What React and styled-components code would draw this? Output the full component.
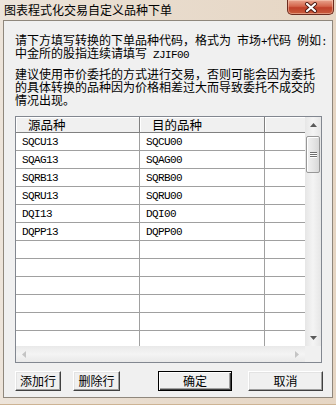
import React from "react"
import styled, { createGlobalStyle, css } from "styled-components"

const GlobalStyle = createGlobalStyle`
  html, body {
    margin: 0;
    padding: 0;
  }
  body {
    width: 336px;
    height: 405px;
    overflow: hidden;
    font-family: "Noto Sans CJK SC", sans-serif;
  }
`

const Window = styled.div`
  width: 336px;
  height: 405px;
  box-sizing: border-box;
  display: flex;
  flex-direction: column;
  background: linear-gradient(90deg, #ede4da 0%, #e8dbcc 50%, #e6d6c4 100%);
  border-bottom: 1px solid #cdb393;
`

const TitleBar = styled.div`
  height: 20px;
  display: flex;
  align-items: flex-start;
  padding-left: 4px;
`

const Title = styled.div`
  font-size: 12px;
  line-height: 20px;
  color: #000;
  white-space: nowrap;
`

const CloseButton = styled.div`
  margin-left: auto;
  margin-right: 2px;
  width: 47px;
  height: 15px;
  box-sizing: border-box;
  display: flex;
  align-items: center;
  justify-content: center;
  border: 1px solid #6b2b1f;
  border-top: none;
  border-radius: 0 0 5px 5px;
  background: linear-gradient(#e9a48e 0%, #d4664c 45%, #c0412a 55%, #c85c3c 100%);
  box-shadow: inset 0 0 0 1px rgba(255, 220, 200, 0.45);
`

const Client = styled.div`
  flex: 1;
  margin: 0 3px 6px 3px;
  border: 1px solid #8f877c;
  background: #f0f0f0;
  padding: 12px 10px 0 11px;
  display: flex;
  flex-direction: column;
`

const Note = styled.p`
  margin: 0;
  font-size: 12px;
  line-height: 13px;
  color: #000;
  white-space: nowrap;
  & + & {
    margin-top: 8px;
  }
`

const Latin = styled.span`
  font-family: "Liberation Mono", monospace;
  font-size: 11px;
  line-height: 0;
  letter-spacing: -0.6px;
`

const GridBox = styled.div`
  margin-top: 10px;
  width: 307px;
  height: 247px;
  box-sizing: border-box;
  border: 1px solid #828790;
  display: grid;
  grid-template-columns: 1fr 16px;
  grid-template-rows: 1fr 16px;
  background: #fff;
`

const TableArea = styled.div`
  overflow: hidden;
`

const HeaderRow = styled.div`
  display: flex;
  height: 16px;
  box-sizing: border-box;
  border-bottom: 1px solid #808080;
  background: #f0f0f0;
`

const HeaderCell = styled.div`
  width: ${p => p.$w}px;
  flex: ${p => (p.$fill ? 1 : "none")};
  box-sizing: border-box;
  border-right: ${p => (p.$fill ? "none" : "1px solid #808080")};
  box-shadow: inset 1px 1px 0 #ffffff;
  padding-left: 12px;
  font-size: 12.5px;
  line-height: 15px;
  color: #000;
`

const Row = styled.div`
  display: flex;
  height: 18px;
  box-sizing: border-box;
  border-bottom: 1px solid #a0a0a0;
`

const Cell = styled.div`
  width: ${p => p.$w}px;
  flex: ${p => (p.$fill ? 1 : "none")};
  box-sizing: border-box;
  border-right: ${p => (p.$fill ? "none" : "1px solid #a0a0a0")};
  padding-left: 6px;
  padding-top: 1px;
  font-family: "Liberation Mono", monospace;
  font-size: 11px;
  letter-spacing: -0.6px;
  line-height: 16px;
  color: #000;
`

const VScroll = styled.div`
  display: flex;
  flex-direction: column;
  background: linear-gradient(90deg, #e6e6e6, #f4f4f4 50%, #e6e6e6);
`

const HScroll = styled.div`
  display: flex;
  align-items: center;
  justify-content: space-between;
  background: linear-gradient(#e9e9e9, #f4f4f4 50%, #e9e9e9);
  padding: 0 6px;
`

const Corner = styled.div`
  background: #f0f0f0;
`

const ArrowBox = styled.div`
  height: 16px;
  flex: none;
  display: flex;
  align-items: center;
  justify-content: center;
`

const Track = styled.div`
  flex: 1;
  padding: 3px 1px 0 1px;
`

const Thumb = styled.div`
  height: 37px;
  box-sizing: border-box;
  border: 1px solid #979797;
  border-radius: 2px;
  background: linear-gradient(90deg, #f1f1f1, #e6e6e6 50%, #d8d8d8);
  box-shadow: inset 1px 1px 0 #ffffff;
  display: flex;
  flex-direction: column;
  align-items: center;
  justify-content: center;
  gap: 1px;
`

const Grip = styled.div`
  width: 7px;
  height: 1px;
  background: #6f6f6f;
  box-shadow: 0 1px 0 #ffffff;
`

const ButtonRow = styled.div`
  margin-top: 8px;
  width: 308px;
  display: flex;
  justify-content: space-between;
`

const ButtonGroup = styled.div`
  display: flex;
  gap: ${p => p.$gap}px;
`

const Button = styled.button`
  width: ${p => p.$w}px;
  height: 20px;
  padding: 0;
  box-sizing: border-box;
  font-family: "Noto Sans CJK SC", sans-serif;
  font-size: 12px;
  line-height: 16px;
  color: #000;
  background: #f0f0f0;
  border: 1px solid;
  border-color: #ffffff #404040 #404040 #ffffff;
  box-shadow: inset -1px -1px 0 #a0a0a0, inset 1px 1px 0 #e3e3e3;
  ${p =>
    p.$default &&
    css`
      border-color: #000;
      box-shadow: inset 1px 1px 0 #ffffff, inset -1px -1px 0 #404040, inset -2px -2px 0 #a0a0a0;
    `}
`

const Triangle = ({ dir, color }) => {
  const pts = {
    up: "0,4 7,4 3.5,0",
    down: "0,0 7,0 3.5,4",
    left: "4,0 4,7 0,3.5",
    right: "0,0 0,7 4,3.5",
  }[dir]
  const vertical = dir === "up" || dir === "down"
  return (
    <svg width={vertical ? 7 : 4} height={vertical ? 4 : 7}>
      <polygon points={pts} fill={color} />
    </svg>
  )
}

const rows = [
  ["SQCU13", "SQCU00"],
  ["SQAG13", "SQAG00"],
  ["SQRB13", "SQRB00"],
  ["SQRU13", "SQRU00"],
  ["DQI13", "DQI00"],
  ["DQPP13", "DQPP00"],
  ["", ""],
  ["", ""],
  ["", ""],
  ["", ""],
  ["", ""],
  ["", ""],
]

export default function App() {
  return (
    <>
      <GlobalStyle />
      <Window>
        <TitleBar>
          <Title>图表程式化交易自定义品种下单</Title>
          <CloseButton>
            <svg width="14" height="11" viewBox="0 0 14 11">
              <path d="M3 2 L11 9 M11 2 L3 9" stroke="#4a1a12" strokeWidth="4" strokeLinecap="round" />
              <path d="M3 2 L11 9 M11 2 L3 9" stroke="#ffffff" strokeWidth="2.2" strokeLinecap="round" />
            </svg>
          </CloseButton>
        </TitleBar>
        <Client>
          <Note>
            请下方填写转换的下单品种代码，格式为<Latin> </Latin>市场<Latin>+</Latin>代码<Latin> </Latin>例如<Latin>:</Latin>
            <br />
            中金所的股指连续请填写<Latin> ZJIF00</Latin>
          </Note>
          <Note>
            建议使用市价委托的方式进行交易，否则可能会因为委托
            <br />
            的具体转换的品种因为价格相差过大而导致委托不成交的
            <br />
            情况出现。
          </Note>
          <GridBox>
            <TableArea>
              <HeaderRow>
                <HeaderCell $w={124}>源品种</HeaderCell>
                <HeaderCell $w={125}>目的品种</HeaderCell>
                <HeaderCell $fill>&nbsp;</HeaderCell>
              </HeaderRow>
              {rows.map((r, i) => (
                <Row key={i}>
                  <Cell $w={124}>{r[0]}</Cell>
                  <Cell $w={125}>{r[1]}</Cell>
                  <Cell $fill />
                </Row>
              ))}
            </TableArea>
            <VScroll>
              <ArrowBox>
                <Triangle dir="up" color="#5a5a5a" />
              </ArrowBox>
              <Track>
                <Thumb>
                  <Grip />
                  <Grip />
                  <Grip />
                </Thumb>
              </Track>
              <ArrowBox>
                <Triangle dir="down" color="#5a5a5a" />
              </ArrowBox>
            </VScroll>
            <HScroll>
              <Triangle dir="left" color="#c4c4c4" />
              <Triangle dir="right" color="#c4c4c4" />
            </HScroll>
            <Corner />
          </GridBox>
          <ButtonRow>
            <ButtonGroup $gap={12}>
              <Button $w={46}>添加行</Button>
              <Button $w={47}>删除行</Button>
            </ButtonGroup>
            <ButtonGroup $gap={16}>
              <Button $w={74} $default>确定</Button>
              <Button $w={75}>取消</Button>
            </ButtonGroup>
          </ButtonRow>
        </Client>
      </Window>
    </>
  )
}
